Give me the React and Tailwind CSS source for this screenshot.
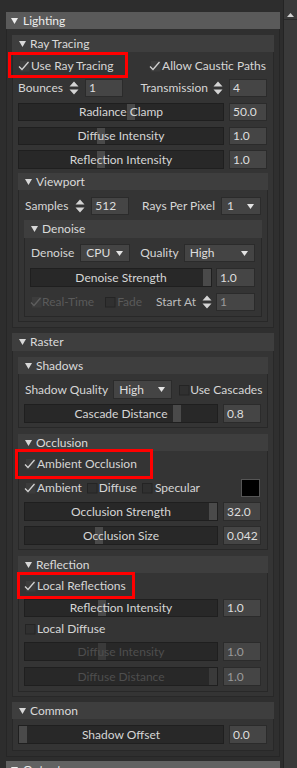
import React from "react";

const Tri = ({ c = "#d8d8d8" }) => (
  <svg width="7" height="6" viewBox="0 0 7 6" className="shrink-0">
    <path d="M0 0H7L3.5 6Z" fill={c} />
  </svg>
);

const Spin = ({ dim }) => (
  <svg width="10" height="14" viewBox="0 0 10 14" className="shrink-0">
    <path d="M5 0.5L9.5 5.5H0.5Z M0.5 8.5H9.5L5 13.5Z" fill={dim ? "#8a8a8a" : "#d4d4d4"} />
  </svg>
);

const Check = ({ on, dim }) => (
  <svg width="12" height="12" viewBox="0 0 12 12" className="shrink-0">
    {on ? (
      <>
        <rect x="2" y="1" width="9.5" height="10.5" fill="#3c3c3c" />
        <polyline points="1,6.5 4,9.5 10.5,2" fill="none" stroke={dim ? "#5e5e5e" : "#d2d2d2"} strokeWidth="1.3" />
      </>
    ) : (
      <rect x="1.5" y="1.5" width="9.5" height="9.5" fill="#303030" stroke="#242424" strokeWidth="1" />
    )}
  </svg>
);

const Val = ({ children, className = "", dim }) => (
  <div className={"h-full bg-[#454545] border border-[#2b2b2b] flex items-center pl-[3px] shrink-0 " + (dim ? "text-[#9a9a9a] " : "text-[#dedede] ") + className}>
    {children}
  </div>
);

const Drop = ({ children, className = "" }) => (
  <div className={"h-full bg-[#444444] border border-[#2b2b2b] flex items-center justify-between pl-[5px] pr-[6px] shrink-0 text-[#dedede] " + className}>
    <span>{children}</span>
    <svg width="7" height="5" viewBox="0 0 7 5"><path d="M0 0H7L3.5 5Z" fill="#e4e4e4" /></svg>
  </div>
);

const Slider = ({ label, handle, right, dim, className = "" }) => (
  <div className={"relative h-full bg-[#282828] border border-[#1f1f1f] flex items-center justify-center " + className}>
    {right ? (
      <div className={"absolute top-0 bottom-0 right-0 w-[8px] " + (dim ? "bg-[#3a3a3a]" : "bg-[#4a4a4a]")} />
    ) : (
      <div className={"absolute top-0 bottom-0 w-[8px] " + (dim ? "bg-[#3a3a3a]" : "bg-[#4a4a4a]")} style={{ left: handle }} />
    )}
    <span className={"relative " + (dim ? "text-[#4e4e4e]" : "text-[#d6d6d6]")}>{label}</span>
  </div>
);

const SliderRow = ({ label, handle, right, value, dim, cls, gap = "gap-[5px]", vw = "w-[38px]" }) => (
  <div className={"flex pr-[1px] " + gap + " " + cls}>
    <Slider label={label} handle={handle} right={right} dim={dim} className="flex-1" />
    <Val className={vw} dim={dim}>{value}</Val>
  </div>
);

const SubHead = ({ title, cls }) => (
  <div className={"bg-[#3e3e3e] flex items-center pl-[7px] gap-[4px] text-[#dadada] shrink-0 " + cls}>
    <Tri />
    <span>{title}</span>
  </div>
);

const bodyCls = "bg-[#343434] border-x border-b border-[#282828] px-[5px] flex flex-col ";

export default function App() {
  return (
    <div className="relative w-[297px] h-[768px] overflow-hidden bg-[#2d2d2d] font-['Lato',sans-serif] text-[12px] leading-none text-[#d6d6d6] whitespace-nowrap flex">
      <div className="w-[283px] pl-[6px] pt-[12px] flex flex-col">
        <div className="w-[274px] flex flex-col">
          <div className="h-[17px] bg-[#5a5a5a] flex items-center pl-[5px] gap-[5px] text-[#ededed]">
            <Tri c="#ededed" />
            <span>Lighting</span>
          </div>
          <div className="bg-[#2f2f2f] border-x border-b border-[#262626] px-[5px] pt-[6px] pb-[5px] flex flex-col">
            {/* Ray Tracing */}
            <SubHead title="Ray Tracing" cls="h-[17px]" />
            <div className={bodyCls + "pb-[5px]"}>
              <div className="mt-[5px] h-[17px] flex items-center justify-between pr-[2px]">
                <div className="flex items-center gap-[1px]"><Check on /><span>Use Ray Tracing</span></div>
                <div className="flex items-center gap-[1px]"><Check on /><span>Allow Caustic Paths</span></div>
              </div>
              <div className="mt-[5px] h-[18px] flex items-center pr-[1px]">
                <span>Bounces</span>
                <span className="ml-[6px]"><Spin /></span>
                <Val className="ml-[6px] w-[38px]">1</Val>
                <div className="flex-1" />
                <span>Transmission</span>
                <span className="ml-[5px]"><Spin /></span>
                <Val className="ml-[6px] w-[38px]">4</Val>
              </div>
              <SliderRow cls="mt-[6px] h-[18px]" label="Radiance Clamp" handle={108} value="50.0" />
              <SliderRow cls="mt-[6px] h-[18px]" label="Diffuse Intensity" handle={78} value="1.0" />
              <SliderRow cls="mt-[5px] h-[19px]" label="Reflection Intensity" handle={78} value="1.0" />
              {/* Viewport */}
              <SubHead title="Viewport" cls="mt-[4px] h-[17px]" />
              <div className={bodyCls + "pb-[4px]"}>
                <div className="mt-[7px] h-[18px] flex items-center pr-[1px]">
                  <span className="ml-[1px]">Samples</span>
                  <span className="ml-[7px]"><Spin /></span>
                  <Val className="ml-[6px] w-[38px]">512</Val>
                  <div className="flex-1" />
                  <span>Rays Per Pixel</span>
                  <Drop className="ml-[6px] w-[40px]">1</Drop>
                </div>
                <SubHead title="Denoise" cls="mt-[5px] h-[18px]" />
                <div className={bodyCls + "pb-[5px]"}>
                  <div className="mt-[6px] h-[18px] flex items-center pr-[1px]">
                    <span className="ml-[1px]">Denoise</span>
                    <Drop className="ml-[6px] w-[50px]">CPU</Drop>
                    <span className="ml-[10px]">Quality</span>
                    <Drop className="ml-[5px] flex-1">High</Drop>
                  </div>
                  <SliderRow cls="mt-[6px] h-[19px]" gap="gap-[4px]" vw="w-[39px]" label="Denoise Strength" right value="1.0" />
                  <div className="mt-[6px] h-[18px] flex items-center pr-[1px] text-[#5a5a5a]">
                    <Check on dim />
                    <span>Real-Time</span>
                    <span className="ml-[10px]"><Check /></span>
                    <span className="ml-[1px]">Fade</span>
                    <div className="flex-1" />
                    <span className="text-[#bdbdbd]">Start At</span>
                    <span className="ml-[6px]"><Spin /></span>
                    <Val dim className="ml-[4px] w-[39px] bg-[#3c3c3c]">1</Val>
                  </div>
                </div>
              </div>
            </div>

            {/* Raster */}
            <SubHead title="Raster" cls="mt-[5px] h-[18px]" />
            <div className={bodyCls + "pb-[4px]"}>
              <SubHead title="Shadows" cls="mt-[6px] h-[17px]" />
              <div className={bodyCls + "pb-[4px]"}>
                <div className="mt-[6px] h-[19px] flex items-center pr-[1px]">
                  <span className="ml-[1px]">Shadow Quality</span>
                  <Drop className="ml-[5px] w-[59px]">High</Drop>
                  <span className="ml-[6px]"><Check /></span>
                  <span>Use Cascades</span>
                </div>
                <SliderRow cls="mt-[5px] h-[19px]" label="Cascade Distance" handle={148} value="0.8" />
              </div>

              <SubHead title="Occlusion" cls="mt-[6px] h-[17px]" />
              <div className={bodyCls + "pb-[4px]"}>
                <div className="mt-[4px] h-[18px] flex items-center gap-[1px]">
                  <Check on /><span>Ambient Occlusion</span>
                </div>
                <div className="mt-[5px] h-[19px] flex items-center pr-[2px]">
                  <Check on /><span className="ml-[1px]">Ambient</span>
                  <span className="ml-[4px]"><Check /></span><span className="ml-[1px]">Diffuse</span>
                  <span className="ml-[4px]"><Check /></span><span className="ml-[2px]">Specular</span>
                  <div className="flex-1" />
                  <div className="w-[19px] h-[18px] bg-black border border-[#555555]" />
                </div>
                <SliderRow cls="mt-[5px] h-[19px]" label="Occlusion Strength" right value="32.0" />
                <SliderRow cls="mt-[5px] h-[19px]" label="Occlusion Size" handle={70} value="0.042" />
              </div>

              <SubHead title="Reflection" cls="mt-[6px] h-[17px]" />
              <div className={bodyCls + "pb-[5px]"}>
                <div className="mt-[4px] h-[17px] flex items-center gap-[1px]">
                  <Check on /><span>Local Reflections</span>
                </div>
                <SliderRow cls="mt-[5px] h-[18px]" label="Reflection Intensity" handle={73} value="1.0" />
                <div className="mt-[3px] h-[17px] flex items-center gap-[1px]">
                  <Check /><span>Local Diffuse</span>
                </div>
                <SliderRow cls="mt-[5px] h-[19px]" dim label="Diffuse Intensity" handle={73} value="1.0" />
                <SliderRow cls="mt-[6px] h-[19px]" dim label="Diffuse Distance" right value="1.0" />
              </div>
            </div>

            {/* Common */}
            <SubHead title="Common" cls="mt-[5px] h-[17px]" />
            <div className={bodyCls + "pb-[6px]"}>
              <SliderRow cls="mt-[6px] h-[19px]" label="Shadow Offset" handle={0} value="0.0" />
            </div>
          </div>
          <div className="mt-[4px] h-[17px] bg-[#626262] flex items-center pl-[5px] gap-[5px] text-[#ededed]">
            <Tri c="#ededed" />
            <span>Output</span>
          </div>
        </div>
      </div>

      {/* scrollbar */}
      <div className="w-[14px] h-full bg-[#3a3a3a] border-l border-[#242424] flex flex-col">
        <div className="mt-[10px] h-[10px] flex items-center justify-center border-b border-[#2a2a2a]">
          <svg width="7" height="4" viewBox="0 0 7 4"><path d="M0 4H7L3.5 0Z" fill="#d0d0d0" /></svg>
        </div>
      </div>

      {/* annotation boxes */}
      <div className="absolute left-[8px] top-[52px] w-[120px] h-[26px] border-[3px] border-[#ff0000]" />
      <div className="absolute left-[15px] top-[449px] w-[138px] h-[30px] border-[3px] border-[#ff0000]" />
      <div className="absolute left-[17px] top-[572px] w-[118px] h-[27px] border-[3px] border-[#ff0000]" />
    </div>
  );
}
